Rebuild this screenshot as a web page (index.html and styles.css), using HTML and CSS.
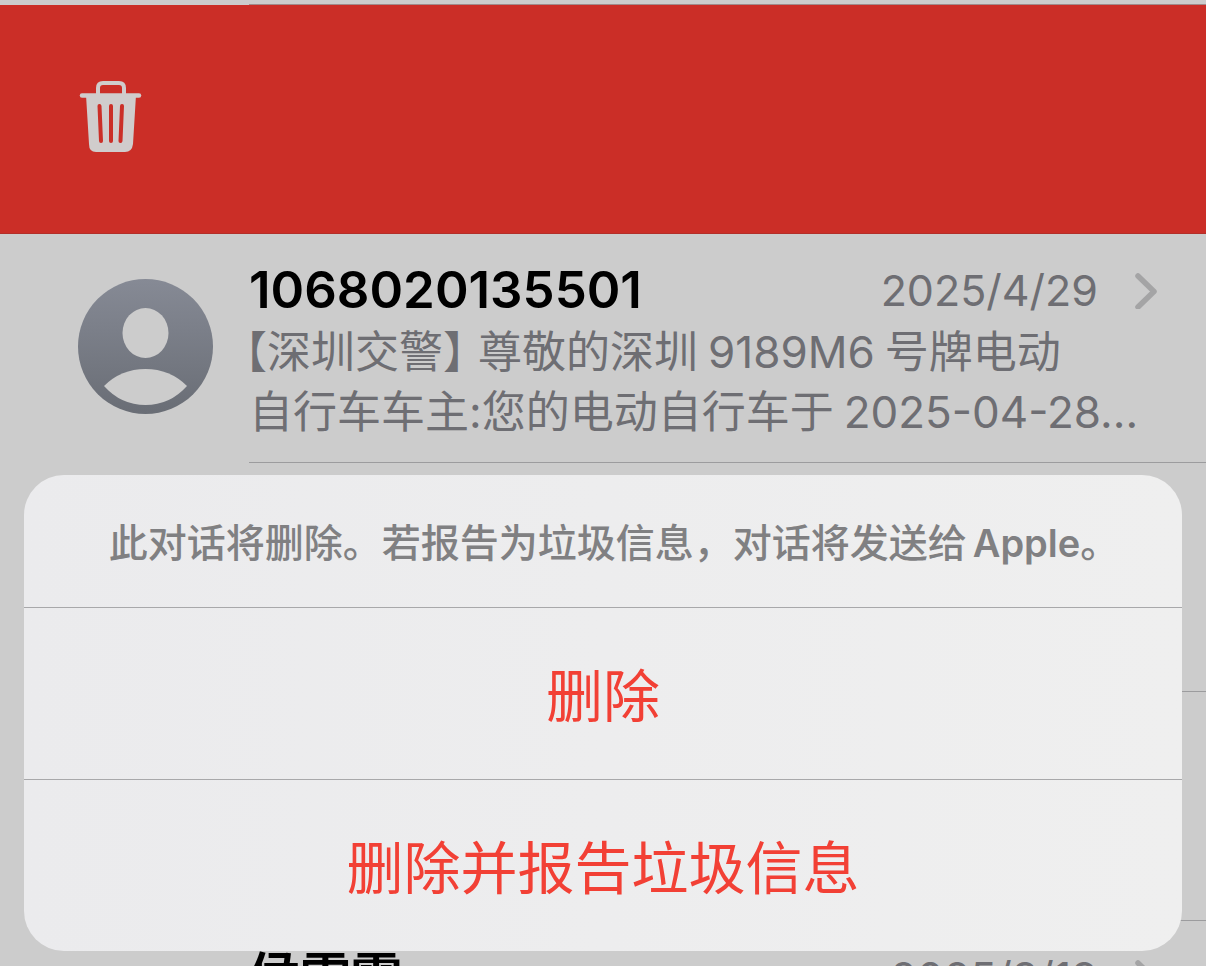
FILE: index.html
```html
<!DOCTYPE html>
<html lang="zh-CN">
<head>
    <meta charset="UTF-8">
    <meta name="viewport" content="width=device-width, initial-scale=1.0">
    <title>信息</title>
    <link rel="stylesheet" href="styles.css">
</head>
<body>
    <main class="messages">
        <div class="divider"></div>
        <div class="delete-row">
            <button class="trash-button" type="button" aria-label="删除">
                <svg width="64" height="74" viewBox="0 0 64 74" fill="none">
                    <path d="M19 14V8Q19 3 24 3H40Q45 3 45 8V14" stroke="#d0cccc" stroke-width="4"/>
                    <path d="M3 15.500H60" stroke="#d0cccc" stroke-width="4.500" stroke-linecap="round"/>
                    <path d="M7 15H57L54 64Q53 72 46 72H17Q10 72 10 64Z" fill="#d0cccc"/>
                    <path d="M20.500 26L22 61M32 26V61M43 26L41.500 61" stroke="#cb2e27" stroke-width="4" stroke-linecap="round"/>
                </svg>
            </button>
        </div>

        <article class="row">
            <svg class="avatar" width="136" height="136" viewBox="0 0 136 136">
                <defs>
                    <linearGradient id="avatarFill" x1="0" y1="0" x2="0" y2="1">
                        <stop offset="0" stop-color="#868a95"/>
                        <stop offset="1" stop-color="#696d75"/>
                    </linearGradient>
                </defs>
                <circle cx="68.500" cy="68.500" r="67.500" fill="url(#avatarFill)"/>
                <ellipse cx="68.500" cy="55" rx="23" ry="25" fill="#cccccc"/>
                <path d="M27 108Q44 91 68.500 91Q93 91 110 108Q93 127 68.500 127Q44 127 27 108Z" fill="#cccccc"/>
            </svg>
            <div class="content">
                <div class="heading">
                    <h2 class="sender">1068020135501</h2>
                    <time class="date">2025/4/29</time>
                    <svg class="chevron" width="24" height="38" viewBox="0 0 24 38" fill="none">
                        <path d="M4 5L20 20.500L4 36" stroke="#a4a4a5" stroke-width="5.500" stroke-linecap="round" stroke-linejoin="round"/>
                    </svg>
                </div>
                <p class="preview"><span class="bracket-open">【</span>深圳交警<span class="bracket-close">】</span>尊敬的深圳<span class="latin">9189M6</span>号牌电动<br>自行车车主:您的电动自行车于<span class="latin">2025-04-28...</span></p>
            </div>
        </article>

        <article class="row"><div class="content"></div></article>
        <article class="row"><div class="content"></div></article>

        <article class="row">
            <div class="content">
                <div class="heading">
                    <h2 class="sender">侯雪霏</h2>
                    <time class="date">2025/3/19</time>
                    <svg class="chevron" width="24" height="38" viewBox="0 0 24 38" fill="none">
                        <path d="M4 5L20 20.500L4 36" stroke="#a4a4a5" stroke-width="5.500" stroke-linecap="round" stroke-linejoin="round"/>
                    </svg>
                </div>
            </div>
        </article>
    </main>

    <div class="sheet" role="dialog" aria-labelledby="sheetMessage">
        <p class="sheet-message" id="sheetMessage">此对话将删除。若报告为垃圾信息，对话将发送给<span class="app-name">Apple</span>。</p>
        <button class="sheet-button" type="button">删除</button>
        <button class="sheet-button" type="button">删除并报告垃圾信息</button>
    </div>
</body>
</html>
```

FILE: styles.css
```css
* {
    box-sizing: border-box;
}
body {
    margin: 0;
    height: 100vh;
    overflow: hidden;
    position: relative;
    background: #cccccc;
    font-family: Inter, "Noto Sans CJK SC", sans-serif;
}
h2, p {
    margin: 0;
}
button {
    border: none;
    background: none;
    padding: 0;
    font-family: inherit;
    cursor: pointer;
}
svg {
    display: block;
    flex: none;
}
.messages {
    height: 100%;
    overflow: hidden;
}
.divider {
    height: 5px;
    margin-left: 249px;
    border-bottom: 1px solid #a08a8a;
}
.delete-row {
    display: flex;
    align-items: center;
    height: 229px;
    padding: 0 0 4px 79px;
    background: #cb2e27;
    border-bottom: 1px solid #b22f29;
}
.row {
    display: flex;
    height: 229px;
    padding-left: 249px;
}
.avatar {
    margin: 44px 36px 0 -172px;
}
.content {
    flex: 1;
    min-width: 0;
    padding: 24px 48px 0 0;
    border-bottom: 1px solid #9c9c9e;
}
.heading {
    display: flex;
    align-items: center;
    height: 64px;
}
.sender {
    flex: 1;
    font-size: 51px;
    font-weight: 600;
    line-height: 64px;
    color: #000;
}
.date {
    font-size: 43px;
    line-height: 64px;
    color: #6e6e73;
}
.chevron {
    margin-left: 36px;
}
.preview {
    font-size: 44px;
    line-height: 60px;
    color: #6e6e73;
    white-space: nowrap;
}
/* half-width brackets */
.bracket-open,
.bracket-close {
    font-feature-settings: "halt";
}
.bracket-open {
    margin-left: -4px;
}
.bracket-close {
    margin-right: 13px;
}
.latin {
    margin: 0 10px;
}
.sheet {
    position: absolute;
    left: 24px;
    right: 24px;
    bottom: 15px;
    overflow: hidden;
    border-radius: 40px;
    background: linear-gradient(90deg, #ebebed, #efefef);
}
.sheet-message {
    padding: 40px 12px 36px 34px;
    font-size: 39px;
    font-weight: 500;
    line-height: 56px;
    text-align: center;
    color: #808082;
}
.app-name {
    margin-left: 6px;
    font-size: 38px;
    font-weight: 600;
}
.sheet-button {
    display: block;
    width: 100%;
    height: 172px;
    padding-bottom: 4px;
    border-top: 1px solid #a8a8aa;
    font-size: 57px;
    color: #f24035;
}
```
